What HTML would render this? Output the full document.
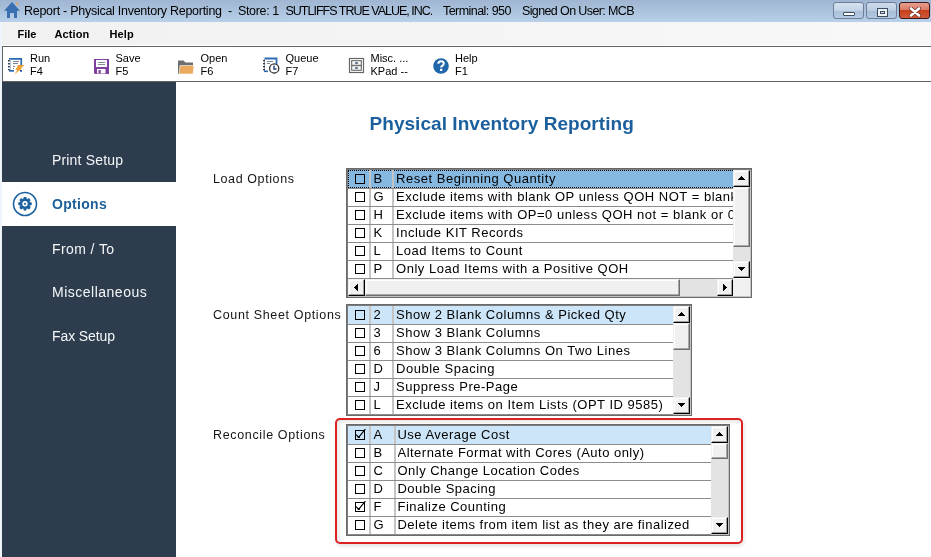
<!DOCTYPE html><html><head><meta charset="utf-8"><style>
html,body{margin:0;padding:0;width:931px;height:557px;overflow:hidden;background:#fff;font-family:"Liberation Sans",sans-serif;}
div{box-sizing:border-box;}
</style></head><body>
<div style="position:relative;width:931px;height:557px;overflow:hidden;">
<div style="position:absolute;left:0px;top:0px;width:931px;height:22px;background:linear-gradient(#9fb5d1,#b8d0ea);"></div>
<svg style="position:absolute;left:0;top:0" width="24" height="22" viewBox="0 0 24 22"><path d="M12 2 L20 10.8 L17 10.8 L17 18 L14 18 L14 13 L10 13 L10 18 L7 18 L7 10.8 L4 10.8 Z" fill="#3a70b0"/><circle cx="17" cy="3.6" r="1.3" fill="#dca868"/></svg>
<div style="position:absolute;left:24px;top:4.72px;font-size:12.5px;line-height:12.5px;color:#000;font-weight:normal;letter-spacing:-0.27px;white-space:nowrap;font-family:'Liberation Sans', sans-serif;transform:translateZ(0);">Report - Physical Inventory Reporting</div>
<div style="position:absolute;left:228px;top:4.72px;font-size:12.5px;line-height:12.5px;color:#000;font-weight:normal;letter-spacing:0px;white-space:nowrap;font-family:'Liberation Sans', sans-serif;transform:translateZ(0);">-</div>
<div style="position:absolute;left:238px;top:4.72px;font-size:12.5px;line-height:12.5px;color:#000;font-weight:normal;letter-spacing:-0.35px;white-space:nowrap;font-family:'Liberation Sans', sans-serif;transform:translateZ(0);">Store: 1</div>
<div style="position:absolute;left:285.5px;top:4.72px;font-size:12.5px;line-height:12.5px;color:#000;font-weight:normal;letter-spacing:-1.0px;white-space:nowrap;font-family:'Liberation Sans', sans-serif;transform:translateZ(0);">SUTLIFFS TRUE VALUE, INC.</div>
<div style="position:absolute;left:443px;top:4.72px;font-size:12.5px;line-height:12.5px;color:#000;font-weight:normal;letter-spacing:-0.55px;white-space:nowrap;font-family:'Liberation Sans', sans-serif;transform:translateZ(0);">Terminal: 950</div>
<div style="position:absolute;left:522px;top:4.72px;font-size:12.5px;line-height:12.5px;color:#000;font-weight:normal;letter-spacing:-0.62px;white-space:nowrap;font-family:'Liberation Sans', sans-serif;transform:translateZ(0);">Signed On User: MCB</div>
<div style="position:absolute;left:833px;top:2px;width:31px;height:17px;border:1px solid #6d7f99;border-radius:3px;background:linear-gradient(#d6e2f0 0%,#c3d3e6 50%,#a9bfd8 51%,#b6cbe2 100%);"><div style="position:absolute;left:9px;top:9px;width:12px;height:4px;background:#fff;border:1px solid #3d4d60;border-radius:1px;"></div></div>
<div style="position:absolute;left:866px;top:2px;width:31px;height:17px;border:1px solid #6d7f99;border-radius:3px;background:linear-gradient(#cfdcec 0%,#bccde2 50%,#a6bcd6 51%,#b3c8e0 100%);"><div style="position:absolute;left:10px;top:5px;width:11px;height:9px;border:1px solid #3d4d60;background:#eef2f6;"><div style="position:absolute;left:2px;top:2px;width:5px;height:3px;border:1px solid #3d4d60;background:#dde;"></div></div></div>
<div style="position:absolute;left:899px;top:2px;width:31px;height:17px;border:1px solid #3a1a1a;border-radius:3px;background:linear-gradient(#e8a090 0%,#d87a66 45%,#c8401e 50%,#d05a3a 100%);"><svg style="position:absolute;left:9px;top:4px" width="12" height="10" viewBox="0 0 12 10"><path d="M2 1.5 L10 8.5 M10 1.5 L2 8.5" stroke="#5a2a20" stroke-width="3.8" stroke-linecap="round"/><path d="M2 1.5 L10 8.5 M10 1.5 L2 8.5" stroke="#fff" stroke-width="2.6" stroke-linecap="round"/></svg></div>
<div style="position:absolute;left:0px;top:22px;width:2px;height:535px;background:#eef4fa;"></div>
<div style="position:absolute;left:2px;top:22px;width:929px;height:24px;background:linear-gradient(to right,#f1f1f1,#f8f8f8);"></div>
<div style="position:absolute;left:17.5px;top:28.69px;font-size:11px;line-height:11px;color:#000;font-weight:bold;letter-spacing:0px;white-space:nowrap;font-family:'Liberation Sans', sans-serif;transform:translateZ(0);">File</div>
<div style="position:absolute;left:54.5px;top:28.69px;font-size:11px;line-height:11px;color:#000;font-weight:bold;letter-spacing:0.1px;white-space:nowrap;font-family:'Liberation Sans', sans-serif;transform:translateZ(0);">Action</div>
<div style="position:absolute;left:109.5px;top:28.69px;font-size:11px;line-height:11px;color:#000;font-weight:bold;letter-spacing:0.1px;white-space:nowrap;font-family:'Liberation Sans', sans-serif;transform:translateZ(0);">Help</div>
<div style="position:absolute;left:2px;top:46px;width:929px;height:36px;background:#fff;border-top:1px solid #626262;border-bottom:1px solid #626262;border-left:1px solid #626262;box-shadow:0 -1px 0 #fff;"></div>
<div style="position:absolute;left:30px;top:52.69px;font-size:11px;line-height:11px;color:#000;font-weight:normal;letter-spacing:0px;white-space:nowrap;font-family:'Liberation Sans', sans-serif;transform:translateZ(0);">Run</div>
<div style="position:absolute;left:30px;top:65.69px;font-size:11px;line-height:11px;color:#000;font-weight:normal;letter-spacing:0px;white-space:nowrap;font-family:'Liberation Sans', sans-serif;transform:translateZ(0);">F4</div>
<div style="position:absolute;left:115.5px;top:52.69px;font-size:11px;line-height:11px;color:#000;font-weight:normal;letter-spacing:0px;white-space:nowrap;font-family:'Liberation Sans', sans-serif;transform:translateZ(0);">Save</div>
<div style="position:absolute;left:115.5px;top:65.69px;font-size:11px;line-height:11px;color:#000;font-weight:normal;letter-spacing:0px;white-space:nowrap;font-family:'Liberation Sans', sans-serif;transform:translateZ(0);">F5</div>
<div style="position:absolute;left:200.5px;top:52.69px;font-size:11px;line-height:11px;color:#000;font-weight:normal;letter-spacing:0px;white-space:nowrap;font-family:'Liberation Sans', sans-serif;transform:translateZ(0);">Open</div>
<div style="position:absolute;left:200.5px;top:65.69px;font-size:11px;line-height:11px;color:#000;font-weight:normal;letter-spacing:0px;white-space:nowrap;font-family:'Liberation Sans', sans-serif;transform:translateZ(0);">F6</div>
<div style="position:absolute;left:285.5px;top:52.69px;font-size:11px;line-height:11px;color:#000;font-weight:normal;letter-spacing:0px;white-space:nowrap;font-family:'Liberation Sans', sans-serif;transform:translateZ(0);">Queue</div>
<div style="position:absolute;left:285.5px;top:65.69px;font-size:11px;line-height:11px;color:#000;font-weight:normal;letter-spacing:0px;white-space:nowrap;font-family:'Liberation Sans', sans-serif;transform:translateZ(0);">F7</div>
<div style="position:absolute;left:370.5px;top:52.69px;font-size:11px;line-height:11px;color:#000;font-weight:normal;letter-spacing:0px;white-space:nowrap;font-family:'Liberation Sans', sans-serif;transform:translateZ(0);">Misc. ...</div>
<div style="position:absolute;left:370.5px;top:65.69px;font-size:11px;line-height:11px;color:#000;font-weight:normal;letter-spacing:0px;white-space:nowrap;font-family:'Liberation Sans', sans-serif;transform:translateZ(0);">KPad --</div>
<div style="position:absolute;left:455px;top:52.69px;font-size:11px;line-height:11px;color:#000;font-weight:normal;letter-spacing:0px;white-space:nowrap;font-family:'Liberation Sans', sans-serif;transform:translateZ(0);">Help</div>
<div style="position:absolute;left:455px;top:65.69px;font-size:11px;line-height:11px;color:#000;font-weight:normal;letter-spacing:0px;white-space:nowrap;font-family:'Liberation Sans', sans-serif;transform:translateZ(0);">F1</div>
<svg style="position:absolute;left:6px;top:56px" width="20" height="20" viewBox="0 0 20 20"><rect x="4" y="3" width="11" height="11.5" fill="#fff"/><rect x="3" y="2" width="13" height="1.8" fill="#2f6db3"/><rect x="14.4" y="2" width="1.7" height="8" fill="#2f6db3"/><rect x="3" y="14" width="5" height="1.7" fill="#2f6db3"/><rect x="14" y="14" width="2" height="1.7" fill="#1f4f93"/><rect x="4" y="3" width="0.9" height="11" fill="#a8c0dc"/><g fill="#2a3448"><rect x="2" y="4" width="1.8" height="1.5"/><rect x="2" y="7" width="1.8" height="1.5"/><rect x="2" y="10" width="1.8" height="1.5"/><rect x="2" y="13" width="1.8" height="1.2"/></g><g fill="#7c8796"><rect x="7" y="5" width="6" height="1"/><rect x="7" y="7" width="5" height="1"/><rect x="7" y="10" width="2" height="1"/><rect x="7" y="12" width="1" height="1"/></g><path d="M12 9 L18.5 9 L14.8 12.3 L16.3 12.3 L8.2 18.6 L11.5 14 L9.5 14 Z" fill="#f0a032"/></svg>
<svg style="position:absolute;left:94px;top:59px" width="15" height="15" viewBox="0 0 15 15"><path d="M0 0 H15 V15 H1 L0 14 Z" fill="#7f3f9f"/><rect x="2" y="1" width="11" height="7" fill="#fff"/><rect x="4" y="3" width="7" height="1" fill="#8a8a9a"/><rect x="4" y="5" width="7" height="1" fill="#8a8a9a"/><rect x="3" y="10" width="8.5" height="4.5" fill="#fff"/><rect x="4.5" y="11" width="2.2" height="3.5" fill="#7f3f9f"/></svg>
<svg style="position:absolute;left:177px;top:59px" width="18" height="16" viewBox="0 0 18 16"><path d="M1 1.5 H6.5 L8.5 3.5 H16 V15 H1 Z" fill="#6e6e6e"/><path d="M3 6.5 H17 L16 15 H2 Z" fill="#eaa95c" stroke="#fff" stroke-width="0.6"/></svg>
<svg style="position:absolute;left:262px;top:57px" width="18" height="18" viewBox="0 0 18 18"><path d="M2.5 1.5 H14.5 V8" fill="none" stroke="#2f6db3" stroke-width="1.8"/><path d="M2.5 1.5 V14.5 H6" fill="none" stroke="#9ab" stroke-width="1"/><rect x="2" y="13.5" width="4" height="1.6" fill="#2f6db3"/><g fill="#334"><rect x="1" y="3" width="2" height="1.3"/><rect x="1" y="6" width="2" height="1.3"/><rect x="1" y="9" width="2" height="1.3"/><rect x="1" y="12" width="2" height="1.3"/></g><g fill="#7c8796"><rect x="5" y="4" width="6" height="1"/><rect x="5" y="6" width="3" height="1"/></g><circle cx="12.2" cy="11.4" r="4.6" fill="#fff" stroke="#333" stroke-width="1.3"/><path d="M12 8.5 V12 H14.5" fill="none" stroke="#1f3f7f" stroke-width="1.4"/></svg>
<svg style="position:absolute;left:348px;top:57px" width="17" height="17" viewBox="0 0 17 17"><rect x="1.5" y="1.5" width="14" height="14" fill="#fff" stroke="#666" stroke-width="1.2"/><rect x="3.7" y="3.7" width="9.6" height="4.6" fill="#fff" stroke="#666" stroke-width="1.1"/><rect x="3.7" y="8.7" width="9.6" height="4.6" fill="#fff" stroke="#666" stroke-width="1.1"/><path d="M6.6 6.8 Q6.6 5 8.5 5 Q10.4 5 10.4 6.8 Z" fill="#4a5a78"/><path d="M6.6 11.8 Q6.6 10 8.5 10 Q10.4 10 10.4 11.8 Z" fill="#4a5a78"/></svg>
<svg style="position:absolute;left:432px;top:57px" width="18" height="18" viewBox="0 0 18 18"><circle cx="9" cy="9" r="7.8" fill="#2066aa"/><path d="M6.3 6.8 Q6.3 4.2 9 4.2 Q11.8 4.2 11.8 6.6 Q11.8 8 10.2 8.8 Q9.2 9.4 9.2 10.6" fill="none" stroke="#fff" stroke-width="2"/><rect x="8" y="11.8" width="2.3" height="2.2" fill="#fff"/></svg>
<div style="position:absolute;left:2px;top:82px;width:174px;height:475px;background:#2e3d4e;"></div>
<div style="position:absolute;left:2px;top:182px;width:174px;height:44px;background:#fff;"></div>
<div style="position:absolute;left:52px;top:152.75px;font-size:14px;line-height:14px;color:#f4f6f8;font-weight:normal;letter-spacing:0.17px;white-space:nowrap;font-family:'Liberation Sans', sans-serif;transform:translateZ(0);">Print Setup</div>
<div style="position:absolute;left:52px;top:241.55px;font-size:14px;line-height:14px;color:#f4f6f8;font-weight:normal;letter-spacing:0.4px;white-space:nowrap;font-family:'Liberation Sans', sans-serif;transform:translateZ(0);">From / To</div>
<div style="position:absolute;left:52px;top:285.45px;font-size:14px;line-height:14px;color:#f4f6f8;font-weight:normal;letter-spacing:0.5px;white-space:nowrap;font-family:'Liberation Sans', sans-serif;transform:translateZ(0);">Miscellaneous</div>
<div style="position:absolute;left:52px;top:329.15px;font-size:14px;line-height:14px;color:#f4f6f8;font-weight:normal;letter-spacing:-0.1px;white-space:nowrap;font-family:'Liberation Sans', sans-serif;transform:translateZ(0);">Fax Setup</div>
<div style="position:absolute;left:52px;top:197.15px;font-size:14px;line-height:14px;color:#1d5f9a;font-weight:bold;letter-spacing:0.3px;white-space:nowrap;font-family:'Liberation Sans', sans-serif;transform:translateZ(0);">Options</div>
<svg style="position:absolute;left:12px;top:191px" width="26" height="26" viewBox="0 0 26 26"><circle cx="13" cy="13" r="11.5" fill="none" stroke="#1d63a0" stroke-width="1.6"/><g fill="#1d63a0" transform="translate(13 12.8)"><circle r="5.1"/><circle cx="0" cy="-5.2" r="1.75" transform="rotate(0)"/><circle cx="0" cy="-5.2" r="1.75" transform="rotate(45)"/><circle cx="0" cy="-5.2" r="1.75" transform="rotate(90)"/><circle cx="0" cy="-5.2" r="1.75" transform="rotate(135)"/><circle cx="0" cy="-5.2" r="1.75" transform="rotate(180)"/><circle cx="0" cy="-5.2" r="1.75" transform="rotate(225)"/><circle cx="0" cy="-5.2" r="1.75" transform="rotate(270)"/><circle cx="0" cy="-5.2" r="1.75" transform="rotate(315)"/><circle r="2.7" fill="#fff"/><circle r="1.1"/></g></svg>
<div style="position:absolute;left:369.5px;top:114.12px;font-size:19px;line-height:19px;color:#1c5f9d;font-weight:bold;letter-spacing:0.05px;white-space:nowrap;font-family:'Liberation Sans', sans-serif;transform:translateZ(0);">Physical Inventory Reporting</div>
<div style="position:absolute;left:213px;top:172.92px;font-size:12.5px;line-height:12.5px;color:#151515;font-weight:normal;letter-spacing:0.6px;white-space:nowrap;font-family:'Liberation Sans', sans-serif;transform:translateZ(0);">Load Options</div>
<div style="position:absolute;left:213px;top:308.92px;font-size:12.5px;line-height:12.5px;color:#151515;font-weight:normal;letter-spacing:0.65px;white-space:nowrap;font-family:'Liberation Sans', sans-serif;transform:translateZ(0);">Count Sheet Options</div>
<div style="position:absolute;left:213px;top:429.12px;font-size:12.5px;line-height:12.5px;color:#151515;font-weight:normal;letter-spacing:0.65px;white-space:nowrap;font-family:'Liberation Sans', sans-serif;transform:translateZ(0);">Reconcile Options</div>
<div style="position:absolute;left:334.5px;top:417.7px;width:408.5px;height:126px;border:2.3px solid #dc2222;border-radius:5px;box-shadow:inset 2px 2px 4px rgba(0,0,0,0.10), 1px 2px 4px rgba(0,0,0,0.12);background:#fff;"></div>
<div style="position:absolute;left:346px;top:168px;width:406px;height:130px;background:#fff;border:1px solid #6a6a6a;box-shadow:inset 1px 1px 0 #7c7c7c, inset -1px -1px 0 #c4c4c4;"></div>
<div style="position:absolute;left:348px;top:170px;width:391px;height:18px;background:#86b9e2;border:1px dotted #000;"></div>
<div style="position:absolute;left:355px;top:174px;width:10px;height:10px;border:1px solid #000;"></div>
<div style="position:absolute;left:373.5px;top:172.40px;font-size:13px;line-height:13px;color:#000;font-weight:normal;letter-spacing:0.3px;white-space:nowrap;font-family:'Liberation Sans', sans-serif;transform:translateZ(0);">B</div>
<div style="position:absolute;left:396px;top:170px;width:337px;height:18px;overflow:hidden;"><div style="position:absolute;left:0px;top:2.40px;font-size:13px;line-height:13px;color:#000;font-weight:normal;letter-spacing:0.52px;white-space:nowrap;font-family:'Liberation Sans', sans-serif;transform:translateZ(0);">Reset Beginning Quantity</div></div>
<div style="position:absolute;left:348px;top:188px;width:385px;height:1px;background:#8c8c8c;"></div>
<div style="position:absolute;left:355px;top:192px;width:10px;height:10px;border:1px solid #000;"></div>
<div style="position:absolute;left:373.5px;top:190.40px;font-size:13px;line-height:13px;color:#000;font-weight:normal;letter-spacing:0.3px;white-space:nowrap;font-family:'Liberation Sans', sans-serif;transform:translateZ(0);">G</div>
<div style="position:absolute;left:396px;top:188px;width:337px;height:18px;overflow:hidden;"><div style="position:absolute;left:0px;top:2.40px;font-size:13px;line-height:13px;color:#000;font-weight:normal;letter-spacing:0.52px;white-space:nowrap;font-family:'Liberation Sans', sans-serif;transform:translateZ(0);">Exclude items with blank OP unless QOH NOT = blank</div></div>
<div style="position:absolute;left:348px;top:206px;width:385px;height:1px;background:#8c8c8c;"></div>
<div style="position:absolute;left:355px;top:210px;width:10px;height:10px;border:1px solid #000;"></div>
<div style="position:absolute;left:373.5px;top:208.40px;font-size:13px;line-height:13px;color:#000;font-weight:normal;letter-spacing:0.3px;white-space:nowrap;font-family:'Liberation Sans', sans-serif;transform:translateZ(0);">H</div>
<div style="position:absolute;left:396px;top:206px;width:337px;height:18px;overflow:hidden;"><div style="position:absolute;left:0px;top:2.40px;font-size:13px;line-height:13px;color:#000;font-weight:normal;letter-spacing:0.52px;white-space:nowrap;font-family:'Liberation Sans', sans-serif;transform:translateZ(0);">Exclude items with OP=0 unless QOH not = blank or 0</div></div>
<div style="position:absolute;left:348px;top:224px;width:385px;height:1px;background:#8c8c8c;"></div>
<div style="position:absolute;left:355px;top:228px;width:10px;height:10px;border:1px solid #000;"></div>
<div style="position:absolute;left:373.5px;top:226.40px;font-size:13px;line-height:13px;color:#000;font-weight:normal;letter-spacing:0.3px;white-space:nowrap;font-family:'Liberation Sans', sans-serif;transform:translateZ(0);">K</div>
<div style="position:absolute;left:396px;top:224px;width:337px;height:18px;overflow:hidden;"><div style="position:absolute;left:0px;top:2.40px;font-size:13px;line-height:13px;color:#000;font-weight:normal;letter-spacing:0.52px;white-space:nowrap;font-family:'Liberation Sans', sans-serif;transform:translateZ(0);">Include KIT Records</div></div>
<div style="position:absolute;left:348px;top:242px;width:385px;height:1px;background:#8c8c8c;"></div>
<div style="position:absolute;left:355px;top:246px;width:10px;height:10px;border:1px solid #000;"></div>
<div style="position:absolute;left:373.5px;top:244.40px;font-size:13px;line-height:13px;color:#000;font-weight:normal;letter-spacing:0.3px;white-space:nowrap;font-family:'Liberation Sans', sans-serif;transform:translateZ(0);">L</div>
<div style="position:absolute;left:396px;top:242px;width:337px;height:18px;overflow:hidden;"><div style="position:absolute;left:0px;top:2.40px;font-size:13px;line-height:13px;color:#000;font-weight:normal;letter-spacing:0.52px;white-space:nowrap;font-family:'Liberation Sans', sans-serif;transform:translateZ(0);">Load Items to Count</div></div>
<div style="position:absolute;left:348px;top:260px;width:385px;height:1px;background:#8c8c8c;"></div>
<div style="position:absolute;left:355px;top:264px;width:10px;height:10px;border:1px solid #000;"></div>
<div style="position:absolute;left:373.5px;top:262.40px;font-size:13px;line-height:13px;color:#000;font-weight:normal;letter-spacing:0.3px;white-space:nowrap;font-family:'Liberation Sans', sans-serif;transform:translateZ(0);">P</div>
<div style="position:absolute;left:396px;top:260px;width:337px;height:18px;overflow:hidden;"><div style="position:absolute;left:0px;top:2.40px;font-size:13px;line-height:13px;color:#000;font-weight:normal;letter-spacing:0.52px;white-space:nowrap;font-family:'Liberation Sans', sans-serif;transform:translateZ(0);">Only Load Items with a Positive QOH</div></div>
<div style="position:absolute;left:348px;top:278px;width:385px;height:1px;background:#8c8c8c;"></div>
<div style="position:absolute;left:369px;top:170px;width:2px;height:108px;background:#c4c4c4;"></div>
<div style="position:absolute;left:392px;top:170px;width:2px;height:108px;background:#c4c4c4;"></div>
<div style="position:absolute;left:348px;top:188px;width:385px;height:1px;background:#8c8c8c;"></div>
<div style="position:absolute;left:348px;top:206px;width:385px;height:1px;background:#8c8c8c;"></div>
<div style="position:absolute;left:348px;top:224px;width:385px;height:1px;background:#8c8c8c;"></div>
<div style="position:absolute;left:348px;top:242px;width:385px;height:1px;background:#8c8c8c;"></div>
<div style="position:absolute;left:348px;top:260px;width:385px;height:1px;background:#8c8c8c;"></div>
<div style="position:absolute;left:348px;top:278px;width:385px;height:1px;background:#8c8c8c;"></div>
<div style="position:absolute;left:733px;top:170px;width:17px;height:108px;background:#e3e3e3;"></div>
<div style="position:absolute;left:733px;top:170px;width:17px;height:17px;background:#f0f0f0;border-style:solid;border-width:1px;border-color:#f0f0f0 #000 #000 #f0f0f0;box-shadow:inset -1px -1px 0 #a0a0a0, inset 1px 1px 0 #fff;"><svg style="position:absolute;left:-1px;top:-1px" width="17" height="17" shape-rendering="crispEdges" fill="#000"><rect x="8" y="6" width="1" height="1"/><rect x="7" y="7" width="3" height="1"/><rect x="6" y="8" width="5" height="1"/><rect x="5" y="9" width="7" height="1"/></svg></div>
<div style="position:absolute;left:733px;top:261px;width:17px;height:17px;background:#f0f0f0;border-style:solid;border-width:1px;border-color:#f0f0f0 #000 #000 #f0f0f0;box-shadow:inset -1px -1px 0 #a0a0a0, inset 1px 1px 0 #fff;"><svg style="position:absolute;left:-1px;top:-1px" width="17" height="17" shape-rendering="crispEdges" fill="#000"><rect x="8" y="9" width="1" height="1"/><rect x="7" y="8" width="3" height="1"/><rect x="6" y="7" width="5" height="1"/><rect x="5" y="6" width="7" height="1"/></svg></div>
<div style="position:absolute;left:733px;top:187px;width:17px;height:60px;background:#f0f0f0;border-style:solid;border-width:1px;border-color:#f0f0f0 #6e6e6e #6e6e6e #f0f0f0;box-shadow:inset -1px -1px 0 #a8a8a8, inset 1px 1px 0 #fff;"></div>
<div style="position:absolute;left:348px;top:279px;width:385px;height:17px;background:#e3e3e3;"></div>
<div style="position:absolute;left:348px;top:279px;width:17px;height:17px;background:#f0f0f0;border-style:solid;border-width:1px;border-color:#f0f0f0 #000 #000 #f0f0f0;box-shadow:inset -1px -1px 0 #a0a0a0, inset 1px 1px 0 #fff;"><svg style="position:absolute;left:-1px;top:-1px" width="17" height="17" shape-rendering="crispEdges" fill="#000"><rect x="6" y="8" width="1" height="1"/><rect x="7" y="7" width="1" height="3"/><rect x="8" y="6" width="1" height="5"/><rect x="9" y="5" width="1" height="7"/></svg></div>
<div style="position:absolute;left:717px;top:279px;width:16px;height:17px;background:#f0f0f0;border-style:solid;border-width:1px;border-color:#f0f0f0 #000 #000 #f0f0f0;box-shadow:inset -1px -1px 0 #a0a0a0, inset 1px 1px 0 #fff;"><svg style="position:absolute;left:-1px;top:-1px" width="16" height="17" shape-rendering="crispEdges" fill="#000"><rect x="9" y="8" width="1" height="1"/><rect x="8" y="7" width="1" height="3"/><rect x="7" y="6" width="1" height="5"/><rect x="6" y="5" width="1" height="7"/></svg></div>
<div style="position:absolute;left:365px;top:279px;width:315px;height:17px;background:#f0f0f0;border-style:solid;border-width:1px;border-color:#f0f0f0 #6e6e6e #6e6e6e #f0f0f0;box-shadow:inset -1px -1px 0 #a8a8a8, inset 1px 1px 0 #fff;"></div>
<div style="position:absolute;left:733px;top:279px;width:17px;height:17px;background:#f0f0f0;"></div>
<div style="position:absolute;left:346px;top:304px;width:346px;height:112px;background:#fff;border:1px solid #6a6a6a;box-shadow:inset 1px 1px 0 #7c7c7c, inset -1px -1px 0 #c4c4c4;"></div>
<div style="position:absolute;left:348px;top:306px;width:331px;height:18px;background:#cde5f8;"></div>
<div style="position:absolute;left:355px;top:310px;width:10px;height:10px;border:1px solid #000;"></div>
<div style="position:absolute;left:373.5px;top:308.40px;font-size:13px;line-height:13px;color:#000;font-weight:normal;letter-spacing:0.3px;white-space:nowrap;font-family:'Liberation Sans', sans-serif;transform:translateZ(0);">2</div>
<div style="position:absolute;left:396px;top:306px;width:277px;height:18px;overflow:hidden;"><div style="position:absolute;left:0px;top:2.40px;font-size:13px;line-height:13px;color:#000;font-weight:normal;letter-spacing:0.52px;white-space:nowrap;font-family:'Liberation Sans', sans-serif;transform:translateZ(0);">Show 2 Blank Columns &amp; Picked Qty</div></div>
<div style="position:absolute;left:348px;top:324px;width:325px;height:1px;background:#8c8c8c;"></div>
<div style="position:absolute;left:355px;top:328px;width:10px;height:10px;border:1px solid #000;"></div>
<div style="position:absolute;left:373.5px;top:326.40px;font-size:13px;line-height:13px;color:#000;font-weight:normal;letter-spacing:0.3px;white-space:nowrap;font-family:'Liberation Sans', sans-serif;transform:translateZ(0);">3</div>
<div style="position:absolute;left:396px;top:324px;width:277px;height:18px;overflow:hidden;"><div style="position:absolute;left:0px;top:2.40px;font-size:13px;line-height:13px;color:#000;font-weight:normal;letter-spacing:0.52px;white-space:nowrap;font-family:'Liberation Sans', sans-serif;transform:translateZ(0);">Show 3 Blank Columns</div></div>
<div style="position:absolute;left:348px;top:342px;width:325px;height:1px;background:#8c8c8c;"></div>
<div style="position:absolute;left:355px;top:346px;width:10px;height:10px;border:1px solid #000;"></div>
<div style="position:absolute;left:373.5px;top:344.40px;font-size:13px;line-height:13px;color:#000;font-weight:normal;letter-spacing:0.3px;white-space:nowrap;font-family:'Liberation Sans', sans-serif;transform:translateZ(0);">6</div>
<div style="position:absolute;left:396px;top:342px;width:277px;height:18px;overflow:hidden;"><div style="position:absolute;left:0px;top:2.40px;font-size:13px;line-height:13px;color:#000;font-weight:normal;letter-spacing:0.52px;white-space:nowrap;font-family:'Liberation Sans', sans-serif;transform:translateZ(0);">Show 3 Blank Columns On Two Lines</div></div>
<div style="position:absolute;left:348px;top:360px;width:325px;height:1px;background:#8c8c8c;"></div>
<div style="position:absolute;left:355px;top:364px;width:10px;height:10px;border:1px solid #000;"></div>
<div style="position:absolute;left:373.5px;top:362.40px;font-size:13px;line-height:13px;color:#000;font-weight:normal;letter-spacing:0.3px;white-space:nowrap;font-family:'Liberation Sans', sans-serif;transform:translateZ(0);">D</div>
<div style="position:absolute;left:396px;top:360px;width:277px;height:18px;overflow:hidden;"><div style="position:absolute;left:0px;top:2.40px;font-size:13px;line-height:13px;color:#000;font-weight:normal;letter-spacing:0.52px;white-space:nowrap;font-family:'Liberation Sans', sans-serif;transform:translateZ(0);">Double Spacing</div></div>
<div style="position:absolute;left:348px;top:378px;width:325px;height:1px;background:#8c8c8c;"></div>
<div style="position:absolute;left:355px;top:382px;width:10px;height:10px;border:1px solid #000;"></div>
<div style="position:absolute;left:373.5px;top:380.40px;font-size:13px;line-height:13px;color:#000;font-weight:normal;letter-spacing:0.3px;white-space:nowrap;font-family:'Liberation Sans', sans-serif;transform:translateZ(0);">J</div>
<div style="position:absolute;left:396px;top:378px;width:277px;height:18px;overflow:hidden;"><div style="position:absolute;left:0px;top:2.40px;font-size:13px;line-height:13px;color:#000;font-weight:normal;letter-spacing:0.52px;white-space:nowrap;font-family:'Liberation Sans', sans-serif;transform:translateZ(0);">Suppress Pre-Page</div></div>
<div style="position:absolute;left:348px;top:396px;width:325px;height:1px;background:#8c8c8c;"></div>
<div style="position:absolute;left:355px;top:400px;width:10px;height:10px;border:1px solid #000;"></div>
<div style="position:absolute;left:373.5px;top:398.40px;font-size:13px;line-height:13px;color:#000;font-weight:normal;letter-spacing:0.3px;white-space:nowrap;font-family:'Liberation Sans', sans-serif;transform:translateZ(0);">L</div>
<div style="position:absolute;left:396px;top:396px;width:277px;height:18px;overflow:hidden;"><div style="position:absolute;left:0px;top:2.40px;font-size:13px;line-height:13px;color:#000;font-weight:normal;letter-spacing:0.52px;white-space:nowrap;font-family:'Liberation Sans', sans-serif;transform:translateZ(0);">Exclude items on Item Lists (OPT ID 9585)</div></div>
<div style="position:absolute;left:348px;top:414px;width:325px;height:1px;background:#8c8c8c;"></div>
<div style="position:absolute;left:369px;top:306px;width:2px;height:108px;background:#c4c4c4;"></div>
<div style="position:absolute;left:392px;top:306px;width:2px;height:108px;background:#c4c4c4;"></div>
<div style="position:absolute;left:348px;top:324px;width:325px;height:1px;background:#8c8c8c;"></div>
<div style="position:absolute;left:348px;top:342px;width:325px;height:1px;background:#8c8c8c;"></div>
<div style="position:absolute;left:348px;top:360px;width:325px;height:1px;background:#8c8c8c;"></div>
<div style="position:absolute;left:348px;top:378px;width:325px;height:1px;background:#8c8c8c;"></div>
<div style="position:absolute;left:348px;top:396px;width:325px;height:1px;background:#8c8c8c;"></div>
<div style="position:absolute;left:348px;top:414px;width:325px;height:1px;background:#8c8c8c;"></div>
<div style="position:absolute;left:673px;top:306px;width:17px;height:108px;background:#e3e3e3;"></div>
<div style="position:absolute;left:673px;top:306px;width:17px;height:17px;background:#f0f0f0;border-style:solid;border-width:1px;border-color:#f0f0f0 #000 #000 #f0f0f0;box-shadow:inset -1px -1px 0 #a0a0a0, inset 1px 1px 0 #fff;"><svg style="position:absolute;left:-1px;top:-1px" width="17" height="17" shape-rendering="crispEdges" fill="#000"><rect x="8" y="6" width="1" height="1"/><rect x="7" y="7" width="3" height="1"/><rect x="6" y="8" width="5" height="1"/><rect x="5" y="9" width="7" height="1"/></svg></div>
<div style="position:absolute;left:673px;top:397px;width:17px;height:17px;background:#f0f0f0;border-style:solid;border-width:1px;border-color:#f0f0f0 #000 #000 #f0f0f0;box-shadow:inset -1px -1px 0 #a0a0a0, inset 1px 1px 0 #fff;"><svg style="position:absolute;left:-1px;top:-1px" width="17" height="17" shape-rendering="crispEdges" fill="#000"><rect x="8" y="9" width="1" height="1"/><rect x="7" y="8" width="3" height="1"/><rect x="6" y="7" width="5" height="1"/><rect x="5" y="6" width="7" height="1"/></svg></div>
<div style="position:absolute;left:673px;top:323px;width:17px;height:27px;background:#f0f0f0;border-style:solid;border-width:1px;border-color:#f0f0f0 #6e6e6e #6e6e6e #f0f0f0;box-shadow:inset -1px -1px 0 #a8a8a8, inset 1px 1px 0 #fff;"></div>
<div style="position:absolute;left:346px;top:424px;width:384px;height:112px;background:#fff;border:1px solid #6a6a6a;box-shadow:inset 1px 1px 0 #7c7c7c, inset -1px -1px 0 #c4c4c4;"></div>
<div style="position:absolute;left:348px;top:426px;width:369px;height:18px;background:#cde5f8;"></div>
<div style="position:absolute;left:355px;top:430px;width:10px;height:10px;border:1px solid #000;"><svg style="position:absolute;left:-1px;top:-1px;overflow:visible" width="10" height="10"><path d="M1.2 4.6 L3.6 7.4 L10.4 -0.8" fill="none" stroke="#000" stroke-width="1.15"/><rect x="2.8" y="6" width="2" height="2" fill="#000"/></svg></div>
<div style="position:absolute;left:373.5px;top:428.40px;font-size:13px;line-height:13px;color:#000;font-weight:normal;letter-spacing:0.3px;white-space:nowrap;font-family:'Liberation Sans', sans-serif;transform:translateZ(0);">A</div>
<div style="position:absolute;left:397.5px;top:426px;width:313.5px;height:18px;overflow:hidden;"><div style="position:absolute;left:0px;top:2.40px;font-size:13px;line-height:13px;color:#000;font-weight:normal;letter-spacing:0.48px;white-space:nowrap;font-family:'Liberation Sans', sans-serif;transform:translateZ(0);">Use Average Cost</div></div>
<div style="position:absolute;left:348px;top:444px;width:363px;height:1px;background:#8c8c8c;"></div>
<div style="position:absolute;left:355px;top:448px;width:10px;height:10px;border:1px solid #000;"></div>
<div style="position:absolute;left:373.5px;top:446.40px;font-size:13px;line-height:13px;color:#000;font-weight:normal;letter-spacing:0.3px;white-space:nowrap;font-family:'Liberation Sans', sans-serif;transform:translateZ(0);">B</div>
<div style="position:absolute;left:397.5px;top:444px;width:313.5px;height:18px;overflow:hidden;"><div style="position:absolute;left:0px;top:2.40px;font-size:13px;line-height:13px;color:#000;font-weight:normal;letter-spacing:0.48px;white-space:nowrap;font-family:'Liberation Sans', sans-serif;transform:translateZ(0);">Alternate Format with Cores (Auto only)</div></div>
<div style="position:absolute;left:348px;top:462px;width:363px;height:1px;background:#8c8c8c;"></div>
<div style="position:absolute;left:355px;top:466px;width:10px;height:10px;border:1px solid #000;"></div>
<div style="position:absolute;left:373.5px;top:464.40px;font-size:13px;line-height:13px;color:#000;font-weight:normal;letter-spacing:0.3px;white-space:nowrap;font-family:'Liberation Sans', sans-serif;transform:translateZ(0);">C</div>
<div style="position:absolute;left:397.5px;top:462px;width:313.5px;height:18px;overflow:hidden;"><div style="position:absolute;left:0px;top:2.40px;font-size:13px;line-height:13px;color:#000;font-weight:normal;letter-spacing:0.48px;white-space:nowrap;font-family:'Liberation Sans', sans-serif;transform:translateZ(0);">Only Change Location Codes</div></div>
<div style="position:absolute;left:348px;top:480px;width:363px;height:1px;background:#8c8c8c;"></div>
<div style="position:absolute;left:355px;top:484px;width:10px;height:10px;border:1px solid #000;"></div>
<div style="position:absolute;left:373.5px;top:482.40px;font-size:13px;line-height:13px;color:#000;font-weight:normal;letter-spacing:0.3px;white-space:nowrap;font-family:'Liberation Sans', sans-serif;transform:translateZ(0);">D</div>
<div style="position:absolute;left:397.5px;top:480px;width:313.5px;height:18px;overflow:hidden;"><div style="position:absolute;left:0px;top:2.40px;font-size:13px;line-height:13px;color:#000;font-weight:normal;letter-spacing:0.48px;white-space:nowrap;font-family:'Liberation Sans', sans-serif;transform:translateZ(0);">Double Spacing</div></div>
<div style="position:absolute;left:348px;top:498px;width:363px;height:1px;background:#8c8c8c;"></div>
<div style="position:absolute;left:355px;top:502px;width:10px;height:10px;border:1px solid #000;"><svg style="position:absolute;left:-1px;top:-1px;overflow:visible" width="10" height="10"><path d="M1.2 4.6 L3.6 7.4 L10.4 -0.8" fill="none" stroke="#000" stroke-width="1.15"/><rect x="2.8" y="6" width="2" height="2" fill="#000"/></svg></div>
<div style="position:absolute;left:373.5px;top:500.40px;font-size:13px;line-height:13px;color:#000;font-weight:normal;letter-spacing:0.3px;white-space:nowrap;font-family:'Liberation Sans', sans-serif;transform:translateZ(0);">F</div>
<div style="position:absolute;left:397.5px;top:498px;width:313.5px;height:18px;overflow:hidden;"><div style="position:absolute;left:0px;top:2.40px;font-size:13px;line-height:13px;color:#000;font-weight:normal;letter-spacing:0.48px;white-space:nowrap;font-family:'Liberation Sans', sans-serif;transform:translateZ(0);">Finalize Counting</div></div>
<div style="position:absolute;left:348px;top:516px;width:363px;height:1px;background:#8c8c8c;"></div>
<div style="position:absolute;left:355px;top:520px;width:10px;height:10px;border:1px solid #000;"></div>
<div style="position:absolute;left:373.5px;top:518.40px;font-size:13px;line-height:13px;color:#000;font-weight:normal;letter-spacing:0.3px;white-space:nowrap;font-family:'Liberation Sans', sans-serif;transform:translateZ(0);">G</div>
<div style="position:absolute;left:397.5px;top:516px;width:313.5px;height:18px;overflow:hidden;"><div style="position:absolute;left:0px;top:2.40px;font-size:13px;line-height:13px;color:#000;font-weight:normal;letter-spacing:0.48px;white-space:nowrap;font-family:'Liberation Sans', sans-serif;transform:translateZ(0);">Delete items from item list as they are finalized</div></div>
<div style="position:absolute;left:348px;top:534px;width:363px;height:1px;background:#8c8c8c;"></div>
<div style="position:absolute;left:369px;top:426px;width:2px;height:108px;background:#c4c4c4;"></div>
<div style="position:absolute;left:394px;top:426px;width:2px;height:108px;background:#c4c4c4;"></div>
<div style="position:absolute;left:348px;top:444px;width:363px;height:1px;background:#8c8c8c;"></div>
<div style="position:absolute;left:348px;top:462px;width:363px;height:1px;background:#8c8c8c;"></div>
<div style="position:absolute;left:348px;top:480px;width:363px;height:1px;background:#8c8c8c;"></div>
<div style="position:absolute;left:348px;top:498px;width:363px;height:1px;background:#8c8c8c;"></div>
<div style="position:absolute;left:348px;top:516px;width:363px;height:1px;background:#8c8c8c;"></div>
<div style="position:absolute;left:348px;top:534px;width:363px;height:1px;background:#8c8c8c;"></div>
<div style="position:absolute;left:711px;top:426px;width:17px;height:108px;background:#e3e3e3;"></div>
<div style="position:absolute;left:711px;top:426px;width:17px;height:17px;background:#f0f0f0;border-style:solid;border-width:1px;border-color:#f0f0f0 #000 #000 #f0f0f0;box-shadow:inset -1px -1px 0 #a0a0a0, inset 1px 1px 0 #fff;"><svg style="position:absolute;left:-1px;top:-1px" width="17" height="17" shape-rendering="crispEdges" fill="#000"><rect x="8" y="6" width="1" height="1"/><rect x="7" y="7" width="3" height="1"/><rect x="6" y="8" width="5" height="1"/><rect x="5" y="9" width="7" height="1"/></svg></div>
<div style="position:absolute;left:711px;top:517px;width:17px;height:17px;background:#f0f0f0;border-style:solid;border-width:1px;border-color:#f0f0f0 #000 #000 #f0f0f0;box-shadow:inset -1px -1px 0 #a0a0a0, inset 1px 1px 0 #fff;"><svg style="position:absolute;left:-1px;top:-1px" width="17" height="17" shape-rendering="crispEdges" fill="#000"><rect x="8" y="9" width="1" height="1"/><rect x="7" y="8" width="3" height="1"/><rect x="6" y="7" width="5" height="1"/><rect x="5" y="6" width="7" height="1"/></svg></div>
<div style="position:absolute;left:711px;top:443px;width:17px;height:16px;background:#f0f0f0;border-style:solid;border-width:1px;border-color:#f0f0f0 #6e6e6e #6e6e6e #f0f0f0;box-shadow:inset -1px -1px 0 #a8a8a8, inset 1px 1px 0 #fff;"></div>
</div></body></html>
